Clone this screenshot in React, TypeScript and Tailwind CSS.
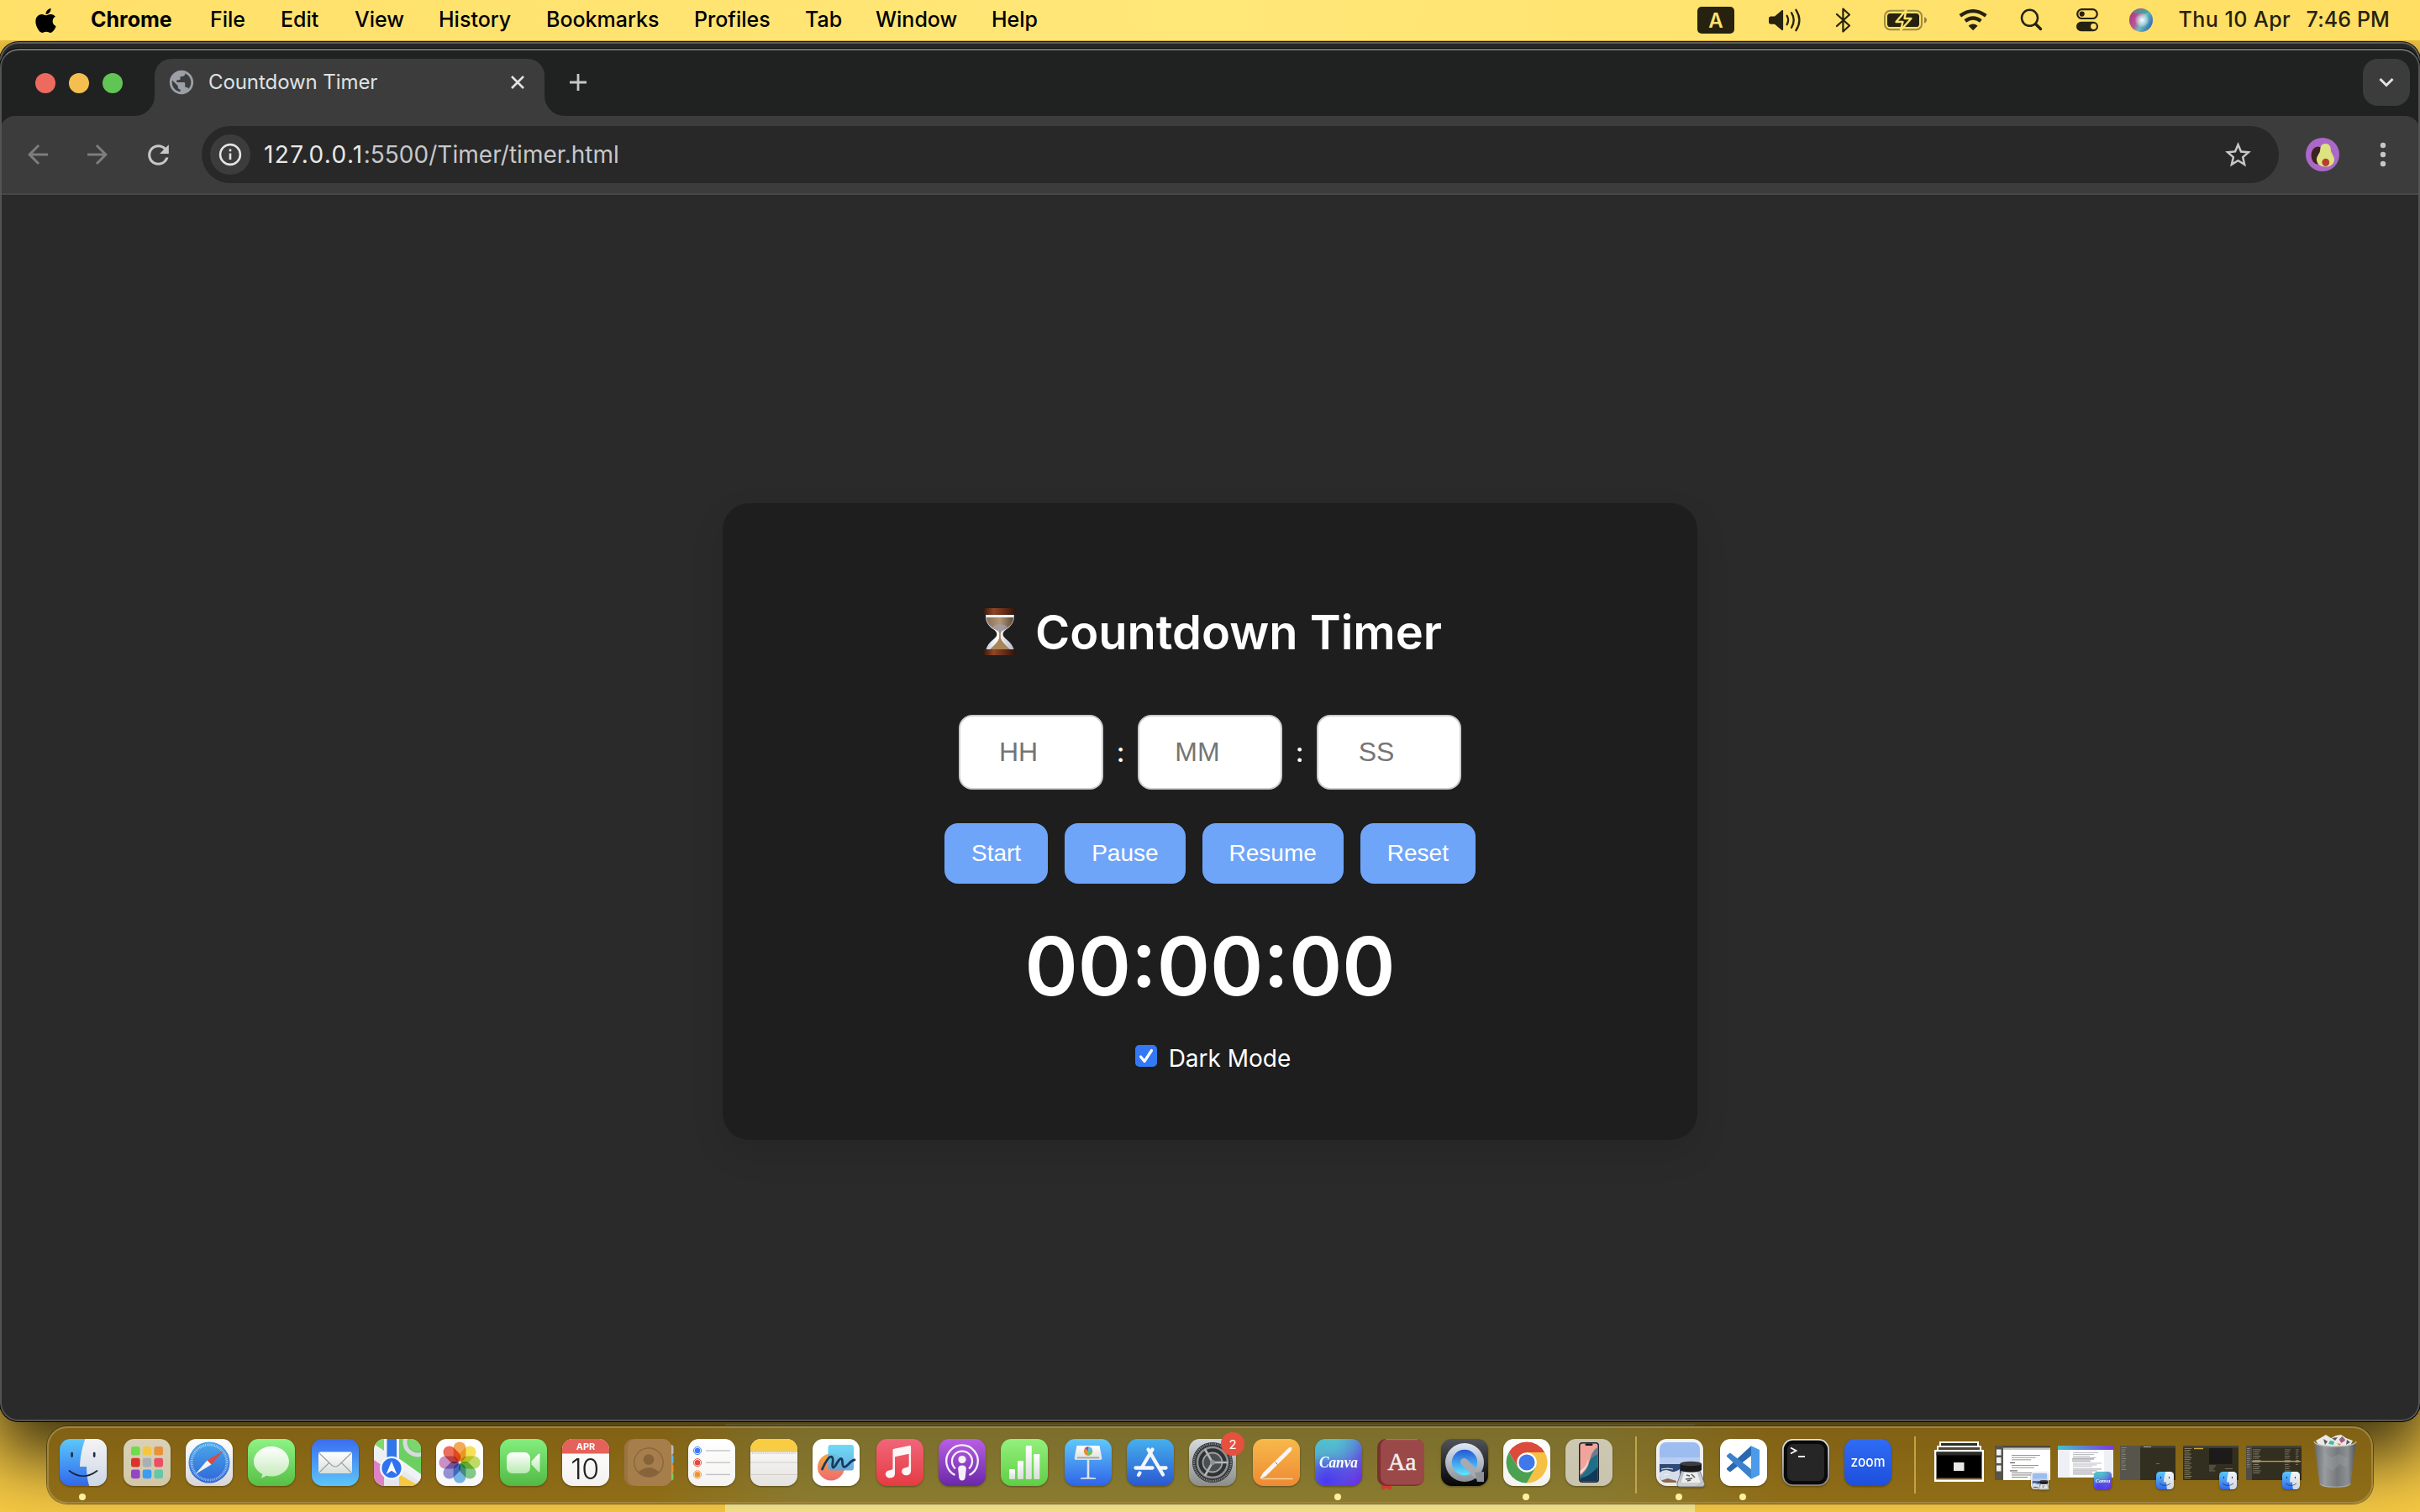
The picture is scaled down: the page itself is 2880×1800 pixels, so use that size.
import React from "react";
import { FaApple } from "react-icons/fa";
import { MdPublic, MdStarBorder, MdRefresh, MdArrowBack, MdArrowForward } from "react-icons/md";

const INK = "#26220f";

/* ---------- Menu bar ---------- */

const MENUS = [
  { label: "Chrome", cls: "w-[142px] font-bold" },
  { label: "File", cls: "w-[84px] font-medium" },
  { label: "Edit", cls: "w-[88px] font-medium" },
  { label: "View", cls: "w-[100px] font-medium" },
  { label: "History", cls: "w-[128px] font-medium" },
  { label: "Bookmarks", cls: "w-[176px] font-medium" },
  { label: "Profiles", cls: "w-[132px] font-medium" },
  { label: "Tab", cls: "w-[84px] font-medium" },
  { label: "Window", cls: "w-[138px] font-medium" },
  { label: "Help", cls: "w-[60px] font-medium" },
];

function StatusIcons() {
  return (
    <svg width="544" height="48" viewBox="2020 0 544 48" fill="none" className="block">
      <rect x="2020" y="8" width="44" height="32" rx="5" fill={INK} />
      <text x="2042" y="33" textAnchor="middle" fontFamily="Inter, sans-serif" fontWeight="600" fontSize="24" fill="#ffe36e">A</text>
      {/* volume */}
      <path d="M2107.5 19.5h4.5l8.5-7.2c.8-.6 1.6-.2 1.6.8v22c0 1-.8 1.4-1.6.8l-8.5-7.2h-4.5c-1.6 0-2.5-.9-2.5-2.500v-4.200c0-1.600.9-2.500 2.500-2.500z" fill={INK} />
      <path d="M2126.600 18.800q3 5.200 0 10.400M2132 15.200q5.400 8.800 0 17.600M2137.400 11.800q8 12.200 0 24.400" stroke={INK} strokeWidth="2.300" strokeLinecap="round" />
      {/* bluetooth */}
      <path d="M2186 17l15 13.500-7.600 7V10.500l7.600 7L2186 31" stroke={INK} strokeWidth="2.200" strokeLinejoin="round" strokeLinecap="round" />
      {/* battery */}
      <rect x="2243" y="12.800" width="44" height="22.400" rx="6.500" stroke={INK} strokeOpacity=".45" strokeWidth="2" />
      <path d="M2290 20.300c4 1.600 4 5.800 0 7.400z" fill={INK} fillOpacity=".5" />
      <rect x="2246" y="16" width="38" height="16" rx="3.600" fill={INK} />
      <path d="M2268.500 12l-12 14h8l-2.500 10 12.500-14h-8z" fill={INK} stroke="#ffe26c" strokeWidth="2.400" strokeLinejoin="round" />
      {/* wifi */}
      <path d="M2332.800 18.800q15.200-11.200 30.600 0" stroke={INK} strokeWidth="4.200" strokeLinecap="butt" />
      <path d="M2338.800 25q9.300-7 18.600 0" stroke={INK} strokeWidth="4.200" />
      <path d="M2342.600 30.700q5.500-4.200 11 0l-5.500 5.600z" fill={INK} />
      {/* search */}
      <circle cx="2415.500" cy="21.300" r="9.500" stroke={INK} strokeWidth="2.500" />
      <path d="M2422.500 28.500l6 6" stroke={INK} strokeWidth="3.400" strokeLinecap="round" />
      {/* control centre */}
      <rect x="2472.200" y="11.200" width="23.600" height="10.800" rx="5.400" stroke={INK} strokeWidth="2.200" />
      <circle cx="2477.700" cy="16.600" r="3.100" fill={INK} />
      <rect x="2471" y="25.800" width="26" height="11.400" rx="5.700" fill={INK} />
      <circle cx="2491.500" cy="31.500" r="3.400" fill="#ffe16a" />
      {/* assistant orb */}
      <defs>
        <linearGradient id="orb" x1="0" y1="0.300" x2="1" y2="0.800">
          <stop offset="0" stopColor="#a83c80" /><stop offset=".35" stopColor="#b8589a" /><stop offset=".55" stopColor="#6fbcbc" /><stop offset="1" stopColor="#2460b4" />
        </linearGradient>
        <radialGradient id="orbg" cx=".55" cy=".5" r=".34"><stop offset="0" stopColor="#fff" /><stop offset=".35" stopColor="#d8f0f6" stopOpacity=".8" /><stop offset="1" stopColor="#fff" stopOpacity="0" /></radialGradient>
      </defs>
      <circle cx="2548" cy="24" r="14" fill="url(#orb)" />
      <path d="M2538 14.500q10-8 20 0q-8 4-20 0z" fill="#3aa392" opacity=".8" />
      <circle cx="2548" cy="24" r="13" fill="url(#orbg)" />
    </svg>
  );
}

function MenuBar() {
  return (
    <header className="relative flex h-12 shrink-0 items-center justify-between bg-linear-to-r from-[#ffe069] via-[#ffe778] to-[#ffde62] pl-[38px] pr-[36px] text-[25px] leading-none text-black">
      <div className="flex items-center">
        <FaApple className="mr-[37px] size-[33px]" />
        <nav className="flex pb-[2px]">
          {MENUS.map((m) => (
            <span key={m.label} className={m.cls}>{m.label}</span>
          ))}
        </nav>
      </div>
      <div className="flex items-center text-[#26220f]">
        <StatusIcons />
        <span className="ml-[29px] w-[152px] pb-[2px] font-medium tracking-[0.450px]">Thu 10 Apr</span>
        <span className="pb-[2px] font-medium tracking-[0.100px]">7:46 PM</span>
      </div>
    </header>
  );
}

/* ---------- Browser ---------- */

function TabStrip() {
  return (
    <div className="flex h-[78px] items-end bg-[#202221]">
      <div className="mb-[27px] ml-[42px] flex gap-4">
        <span className="size-6 rounded-full bg-[#ed6a5f]" />
        <span className="size-6 rounded-full bg-[#f5bf50]" />
        <span className="size-6 rounded-full bg-[#61c555]" />
      </div>
      <div className="ml-[14px] size-6 bg-[#3c3c3c]"><div className="size-6 rounded-br-[24px] bg-[#202221]" /></div>
      <div className="flex h-[68px] w-[464px] items-center rounded-t-[20px] bg-[#3c3c3c] pb-[13px] pl-[15px] pr-[23px]">
        <MdPublic className="size-[34px] text-[#9aa0a6]" />
        <span className="ml-[15px] flex-1 text-[24px] leading-none tracking-[-0.080px] text-[#dfe1e3]">Countdown Timer</span>
        <svg width="18" height="18" viewBox="0 0 18 18" stroke="#e3e3e3" strokeWidth="2.600"><path d="M2 2l14 14M16 2L2 16" /></svg>
      </div>
      <div className="size-6 bg-[#3c3c3c]"><div className="size-6 rounded-bl-[24px] bg-[#202221]" /></div>
      <svg className="mb-[28px] ml-[4px]" width="24" height="24" viewBox="0 0 24 24" stroke="#c7c7c7" strokeWidth="2.800"><path d="M12 2v20M2 12h20" /></svg>
      <div className="mb-3 ml-auto mr-[12px] flex size-14 items-center justify-center rounded-[18px] bg-[#3c3c3c]">
        <svg width="20" height="14" viewBox="0 0 20 14" fill="none" stroke="#e3e3e3" strokeWidth="3"><path d="M2.500 3l7.500 7.500L17.500 3" /></svg>
      </div>
    </div>
  );
}

function Toolbar() {
  return (
    <div className="bg-[#202221]">
      <div className="flex h-[94px] items-center rounded-t-[18px] border-b-2 border-[#474747] bg-[#3c3c3c] pb-0">
        <MdArrowBack className="ml-[27px] size-[36px] text-[#7d7d7d]" />
        <MdArrowForward className="ml-[35px] size-[36px] text-[#7d7d7d]" />
        <MdRefresh className="ml-[36px] size-[37px] text-[#c7c7c7]" />
        <div className="ml-[33px] flex h-[68px] w-[2472px] items-center rounded-full bg-[#282828] pl-[10px] pr-[30px]">
          <span className="flex size-12 items-center justify-center rounded-full bg-[#3c3c3c]">
            <svg width="28" height="28" viewBox="0 0 28 28" fill="none"><circle cx="14" cy="14" r="11.900" stroke="#e3e3e3" strokeWidth="2.600" /><path d="M14 12.500v7.500M14 7.500v2.700" stroke="#e3e3e3" strokeWidth="2.600" /></svg>
          </span>
          <span className="ml-[16px] flex-1 text-[28px] leading-none tracking-[0.030px] text-[#c7c7c7]"><span className="tracking-[1.350px] text-[#e8e8e8]">127.0.0.1</span>:5500/Timer/timer.html</span>
          <MdStarBorder className="size-[37px] text-[#c7c7c7]" />
        </div>
        <svg className="ml-[32px]" width="40" height="40" viewBox="0 0 40 40">
          <circle cx="20" cy="20" r="20" fill="#ab68c8" />
          <ellipse cx="14.500" cy="21" rx="8" ry="10.500" fill="#3b2320" />
          <path d="M23.500 7c4.500 0 6.500 3.600 6.300 7.400-.1 3 4.200 7 4.200 11.500 0 5-4.500 8.600-10.500 8.600S13 31 13 26c0-4.500 4-7.600 4.200-11.200C17.400 10.500 19 7 23.500 7z" fill="#dde37f" />
          <ellipse cx="23.800" cy="29.300" rx="4.400" ry="4.600" fill="#b8402b" />
        </svg>
        <svg className="ml-[48px]" width="8" height="32" viewBox="0 0 8 32" fill="#c7c7c7"><circle cx="4" cy="5" r="3.200" /><circle cx="4" cy="16" r="3.200" /><circle cx="4" cy="27" r="3.200" /></svg>
      </div>
    </div>
  );
}

function Hourglass() {
  return (
    <svg width="62" height="60" viewBox="0 0 62 60" className="-mt-[3px]">
      <defs>
        <linearGradient id="wood" x1="0" x2="1"><stop offset="0" stopColor="#3c1a0e" /><stop offset=".3" stopColor="#8f4626" /><stop offset=".6" stopColor="#6b2f18" /><stop offset="1" stopColor="#2c130b" /></linearGradient>
        <linearGradient id="sandT" x1="0" x2="1"><stop offset="0" stopColor="#8a6f54" /><stop offset=".5" stopColor="#b3967a" /><stop offset="1" stopColor="#5e4a38" /></linearGradient>
        <linearGradient id="glassB" x1="0" x2="1"><stop offset="0" stopColor="#c4c9dc" /><stop offset=".4" stopColor="#ffffff" /><stop offset="1" stopColor="#b2b7cc" /></linearGradient>
      </defs>
      <path d="M14 9h34c.5 9-3 14-9 18-4 3-5 5-4 8 1 2 4 4 7 7 4 4 6 8 6 13H14c0-5 2-9 6-13 3-3 6-5 7-7 1-3 0-5-4-8-6-4-9.500-9-9-18z" fill="url(#glassB)" />
      <path d="M15 13h32c-.5 6-3 9.500-8 13-3 2-5 3-8 3s-5-1-8-3c-5-3.500-7.500-7-8-13z" fill="url(#sandT)" />
      <path d="M22 24q9-6 18 0l-9 8z" fill="#9fa0aa" opacity=".75" />
      <path d="M31 28v14" stroke="#a58561" strokeWidth="1.600" />
      <path d="M31 34c1 8 7 12 12 17H19c5-5 11-9 12-17z" fill="#a88457" />
      <path d="M15 10h32v3H15z" fill="#eef3f5" />
      <rect x="12" y="2" width="38" height="8" rx="2" fill="url(#wood)" />
      <rect x="12" y="51" width="38" height="7" rx="2" fill="url(#wood)" />
    </svg>
  );
}

function TimerInput({ placeholder }: { placeholder: string }) {
  return (
    <input
      placeholder={placeholder}
      className="h-[89px] w-[172px] rounded-[16px] border-2 border-[#cccccc] bg-white pl-[20px] pr-[50px] text-center font-['Liberation_Sans',Arial,sans-serif] text-[32px] text-black placeholder:text-[#757575]"
    />
  );
}

function TimerCard() {
  return (
    <section className="mt-[367px] flex h-[758px] w-[1160px] flex-col items-center rounded-[32px] bg-[#1e1e1e] pt-[120px] text-white shadow-[0_16px_40px_rgba(0,0,0,0.1)]">
      <h1 className="flex h-[68px] items-center gap-[11px] pr-[5px] text-[56px] font-semibold leading-none"><Hourglass /><span>Countdown Timer</span></h1>
      <div className="mt-16 flex items-center text-[32px] font-medium">
        <TimerInput placeholder="HH" />
        <span className="w-[41px] text-center">:</span>
        <TimerInput placeholder="MM" />
        <span className="w-[41px] text-center">:</span>
        <TimerInput placeholder="SS" />
      </div>
      <div className="mt-10 flex gap-5 font-['Liberation_Sans',Arial,sans-serif] text-[28px]">
        {["Start", "Pause", "Resume", "Reset"].map((b) => (
          <button key={b} className="h-[72px] rounded-[16px] bg-[#6fa5f9] px-8 pb-[1px]">{b}</button>
        ))}
      </div>
      <div className="mt-10 flex h-[116px] items-center text-[96px] font-semibold leading-none">00:00:00</div>
      <label className="mt-[35px] flex h-[34px] items-center gap-[14px] pl-[7px] text-[28px] leading-none">
        <span className="-mt-[7px] flex size-[26px] items-center justify-center rounded-[5px] bg-[#3478f6]">
          <svg width="20" height="20" viewBox="0 0 20 20" fill="none" stroke="#fff" strokeWidth="3.200" strokeLinecap="round" strokeLinejoin="round"><path d="M3.500 11l4.500 5.500L16.500 3.500" /></svg>
        </span>
        Dark Mode
      </label>
    </section>
  );
}

function BrowserWindow() {
  return (
    <main className="relative mt-[10px] flex h-[1634px] shrink-0 flex-col overflow-hidden rounded-[22px] bg-[#2a2a2a] shadow-[0_0_0_1px_#050505]">
      <div className="h-[2px] shrink-0" />
      <TabStrip />
      <Toolbar />
      <div className="flex flex-1 justify-center"><TimerCard /></div>
      <div className="pointer-events-none absolute inset-0 rounded-[22px] border-2 border-[#525352] border-t-[#6e6f6e]" />
    </main>
  );
}

/* ---------- Dock icons (56 x 56) ---------- */

function Tile({ id, from, to, diag, children }: { id: string; from: string; to: string; diag?: boolean; children?: React.ReactNode }) {
  return (
    <svg width="100%" height="100%" viewBox="0 0 56 56" fill="none" className="block overflow-visible drop-shadow-[0_1px_1px_rgba(0,0,0,0.35)]">
      <defs>
        <linearGradient id={`g-${id}`} x1="0" y1="0" x2={diag ? 1 : 0} y2="1"><stop offset="0" stopColor={from} /><stop offset="1" stopColor={to} /></linearGradient>
        <linearGradient id="white" x1="0" y1="0" x2="0" y2="1"><stop offset="0" stopColor="#fff" /><stop offset="1" stopColor="#d9dedb" /></linearGradient>
        <clipPath id="tile"><rect width="56" height="56" rx="12.500" /></clipPath>
      </defs>
      <rect width="56" height="56" rx="12.500" fill={`url(#g-${id})`} />
      {children}
    </svg>
  );
}

const Finder = () => (
  <Tile id="finder" from="#5cc8fb" to="#3068ec">
    <defs><linearGradient id="fr" x1="0" y1="0" x2="0" y2="1"><stop offset="0" stopColor="#f4f4f6" /><stop offset="1" stopColor="#cdd7e6" /></linearGradient></defs>
    <g clipPath="url(#tile)">
      <path d="M30.500 0C27 9 24.500 20 24 33h8c0 9 1 16 3.200 23H56V0z" fill="url(#fr)" />
    </g>
    <path d="M14.600 17v3.600M41.200 17v3.600" stroke="#1d2b3a" strokeWidth="2.600" strokeLinecap="round" />
    <path d="M11.500 38Q28 50.500 44.500 38" stroke="#1c2530" strokeWidth="1.700" strokeLinecap="round" />
  </Tile>
);

const LAUNCH = [["#6fdc4e", "#f5c741", "#e9923a"], ["#d8352a", "#a7b0b5", "#ea4f63"], ["#9245c8", "#3b9df2", "#66c6a8"]];
const Launchpad = () => (
  <Tile id="launch" from="#d9d1b8" to="#d2c7a8">
    {LAUNCH.map((row, r) => row.map((c, i) => <rect key={`${r}${i}`} x={9 + i * 13.700} y={9 + r * 13.800} width="10.600" height="10.600" rx="2.400" fill={c} />))}
  </Tile>
);

const Safari = () => (
  <Tile id="safari" from="#ffffff" to="#d6d6d8">
    <defs><linearGradient id="sf" x1="0" y1="0" x2="0" y2="1"><stop offset="0" stopColor="#4aa8ea" /><stop offset="1" stopColor="#2f66d8" /></linearGradient></defs>
    <circle cx="28" cy="28" r="24.500" fill="url(#sf)" />
    <circle cx="28" cy="28" r="21" stroke="#e4f0fb" strokeOpacity=".8" strokeWidth="3" strokeDasharray="0.700 1.133" />
    <path d="M45 14L30.500 30.500 25.500 25.500z" fill="#dc4a3e" />
    <path d="M11.500 42L25.500 25.500l5 5z" fill="#f4f4f4" />
  </Tile>
);

const Messages = () => (
  <Tile id="msg" from="#8df385" to="#57bf45">
    <defs><linearGradient id="bub" x1="0" y1="0" x2="0" y2="1"><stop offset="0" stopColor="#fff" /><stop offset="1" stopColor="#c3ebb9" /></linearGradient></defs>
    <path d="M28 9c11.600 0 21 8 21 18s-9.400 17.500-21 17.500c-2.500 0-4.500-.3-6.500-.8-1.500 1.400-3.500 2.300-6 2.600 1-1.300 1.600-2.800 1.700-4.600C11 38.500 7 33.200 7 27 7 17 16.400 9 28 9z" fill="url(#bub)" />
  </Tile>
);

const Mail = () => (
  <Tile id="mail" from="#3a6cf0" to="#5dc6f8">
    <rect x="8" y="15.500" width="40" height="25.500" rx="2.500" fill="url(#white)" />
    <path d="M9 17l14.500 14q4.500 4 9 0L47 17M9 40l11.500-11.500M47 40L35.500 28.500" stroke="#9c9fa3" strokeWidth="1.100" />
  </Tile>
);

const Maps = () => (
  <Tile id="maps" from="#f2f4f6" to="#e4e6ea">
    <g clipPath="url(#tile)">
      <path d="M0 0h12v14L0 6z" fill="#7fd96f" />
      <path d="M30 0h26v44L30 26z" fill="#6cd061" />
      <path d="M28 22l28 20v10L28 32z" fill="#f1f2f6" />
      <path d="M0 25l12 8v23H0z" fill="#dd82c4" />
      <path d="M30 56V42l24 14z" fill="#f6c944" />
      <path d="M15.500 0h11.500v26H15.500z" fill="#2f76ea" />
      <circle cx="52" cy="4" r="15" stroke="#d7dadf" strokeWidth="5" /><circle cx="52" cy="4" r="11" fill="#7bd66e" />
    </g>
    <circle cx="21" cy="34.700" r="14" fill="#f6f6f8" /><circle cx="21" cy="34.700" r="11.600" fill="#2f73ee" />
    <path d="M21 26.500l6.300 15.500-6.300-4.300-6.300 4.300z" fill="#fff" />
  </Tile>
);

const PETALS = ["#f19a37", "#f3dc3c", "#b5d54a", "#6cbf73", "#5fa8e2", "#7d80cc", "#bf7cb8", "#ea5340"];
const Photos = () => (
  <Tile id="photos" from="#ffffff" to="#f8f8f8">
    <g className="isolate">
      {PETALS.map((c, i) => <rect key={c} x="20.600" y="3.400" width="14.800" height="23.400" rx="7.400" fill={c} fillOpacity=".85" transform={`rotate(${i * 45} 28 28)`} className="mix-blend-multiply" />)}
    </g>
  </Tile>
);

const FaceTime = () => (
  <Tile id="ft" from="#84ef7e" to="#52b944">
    <defs><linearGradient id="cam" x1="0" y1="0" x2="0" y2="1"><stop offset="0" stopColor="#fff" /><stop offset="1" stopColor="#b9e9b0" /></linearGradient></defs>
    <rect x="8" y="16" width="28" height="25" rx="6.500" fill="url(#cam)" />
    <path d="M37.500 26.500l8-8.500c1-1 2-.6 2 .8v19.400c0 1.400-1 1.800-2 .8l-8-8.500z" fill="url(#cam)" />
  </Tile>
);

const Calendar = () => (
  <Tile id="cal" from="#ffffff" to="#f3f2f0">
    <path d="M0 17.500V12.500A12.500 12.500 0 0 1 12.500 0h31A12.500 12.500 0 0 1 56 12.500v5z" fill="#e5625a" />
    <text x="28" y="13.300" textAnchor="middle" fontFamily="Inter, sans-serif" fontWeight="700" fontSize="11" fill="#fff">APR</text>
    <text x="27" y="48" textAnchor="middle" fontFamily="Inter, sans-serif" fontWeight="300" fontSize="34" fill="#222" letterSpacing="-0.500">10</text>
  </Tile>
);

const Contacts = () => (
  <svg width="100%" height="100%" viewBox="0 0 56 56" fill="none" className="block overflow-visible">
    <rect x="50" y="7" width="8.500" height="12" rx="3" fill="#b9bcc0" /><rect x="50" y="19" width="8.500" height="11" rx="2" fill="#5fb6e6" /><rect x="50" y="30" width="8.500" height="11" rx="2" fill="#e88f35" /><rect x="50" y="40" width="8.500" height="9.500" rx="3" fill="#6fd066" />
    <rect width="56" height="56" rx="11" fill="#9b7444" /><rect x="4" width="52" height="56" rx="10" fill="#a67e4b" />
    <circle cx="29" cy="28" r="17.200" stroke="#87633a" strokeWidth="1.200" /><circle cx="29" cy="24.500" r="6.300" fill="#87633a" />
    <path d="M16.500 39.500q12.500-11 25 0-12.500 11-25 0z" fill="#87633a" />
  </svg>
);

const Reminders = () => (
  <Tile id="rem" from="#ffffff" to="#f4f3f1">
    {["#3a7bf3", "#e2483e", "#ec9433"].map((c, i) => (
      <g key={c}><circle cx="11" cy={14 + i * 14.200} r="4.600" stroke={c} strokeWidth=".9" /><circle cx="11" cy={14 + i * 14.200} r="3.300" fill={c} /><path d={`M21 ${14 + i * 14.200}h29`} stroke="#c4c4c8" strokeWidth="1.400" /></g>
    ))}
  </Tile>
);

const Notes = () => (
  <Tile id="notes" from="#ffffff" to="#e3e2de">
    <path d="M0 14.500V12.500A12.500 12.500 0 0 1 12.500 0h31A12.500 12.500 0 0 1 56 12.500v2z" fill="#f8cd44" />
    <path d="M0 15h56" stroke="#a8a18c" strokeWidth=".8" />
    <path d="M2 17.200h52" stroke="#b9b8b5" strokeWidth="1.200" strokeDasharray="1 1.200" />
    <path d="M0 28h56M0 42.500h56" stroke="#cfcecb" strokeWidth="1" />
  </Tile>
);

const Freeform = () => (
  <Tile id="ff" from="#ffffff" to="#ffffff">
    <defs>
      <linearGradient id="ffo" x1="0" y1="0" x2="0" y2="1"><stop offset="0" stopColor="#f6a93b" /><stop offset="1" stopColor="#ee6a72" /></linearGradient>
      <linearGradient id="ffc" x1="0" y1="0" x2="0" y2="1"><stop offset="0" stopColor="#62d9f6" /><stop offset="1" stopColor="#5ba5dd" /></linearGradient>
    </defs>
    <circle cx="22" cy="33.500" r="16" fill="url(#ffo)" /><rect x="18.500" y="7" width="30.500" height="30.500" rx="3" fill="url(#ffc)" fillOpacity=".92" />
    <path d="M11.500 36C15 28 20 19.500 23 21.500c3.500 2.500-1.500 12 1.500 12.500 3 .5 6-11 9.500-10.500 3 .5 0 9 3.500 9.800 4 .8 7.500-8.300 12.500-8.300" stroke="#143a5e" strokeWidth="2.800" strokeLinecap="round" />
  </Tile>
);

const Music = () => (
  <Tile id="music" from="#f0667a" to="#e63b42">
    <path d="M19.500 13.500c0-1 .5-1.500 1.500-1.700L39.500 8c1-.2 1.600.2 1.600 1.200v28.500c0 4-2.500 5.500-5.600 5.500-3 0-5.300-1.800-5.300-4.500 0-3.500 3-4.500 5.500-4.800 2.300-.3 3-.8 3-2.600V17.800L22 21.300v20c0 3.500-2.600 5.200-5.600 5.200-3.200 0-5.500-1.800-5.500-4.500 0-3.200 2.600-4.300 5.200-4.700 2.600-.4 3.400-.9 3.400-2.700z" fill="#fdf6f6" />
  </Tile>
);

const Podcasts = () => (
  <Tile id="pod" from="#b85fe4" to="#6a28a8">
    <path d="M19.500 43a18.800 18.800 0 1 1 17 0" stroke="#f5effa" strokeWidth="2.300" />
    <path d="M20 35.500a12 12 0 1 1 16 0" stroke="#f5effa" strokeWidth="2.300" />
    <circle cx="28" cy="24.500" r="4.600" fill="#f5effa" />
    <path d="M28 31.500c3.500 0 5 1.600 4.800 4.500l-1 9.500c-.3 2.600-1.600 4-3.800 4s-3.500-1.400-3.800-4l-1-9.500c-.2-2.900 1.300-4.500 4.800-4.500z" fill="#f5effa" />
  </Tile>
);

const Numbers = () => (
  <Tile id="num" from="#93f07c" to="#5fce45">
    {[[10, 36], [20, 26], [29.800, 8], [39.300, 18]].map(([x, y]) => <rect key={x} x={x} y={y} width="7" height={48 - y} rx="1" fill="url(#white)" />)}
  </Tile>
);

const Keynote = () => (
  <Tile id="key" from="#60c8fa" to="#2f64e8">
    <path d="M14.500 8h27l2.800 14.500c.3 1.600-.3 2.500-2 2.500H13.700c-1.700 0-2.300-.9-2-2.500z" fill="url(#white)" />
    <path d="M15 21.500h26v1.800H15z" fill="#a9a49c" />
    <circle cx="28" cy="14.500" r="5.200" fill="#e58d3c" /><path d="M28 14.500V9.300a5.200 5.200 0 0 1 5.200 5.200z" fill="#5fb8e8" /><path d="M28 14.500h5.200a5.200 5.200 0 0 1-6.500 5z" fill="#6cc561" /><path d="M28 14.500l-4-3.400A5.200 5.200 0 0 1 28 9.300z" fill="#9a4fa8" />
    <path d="M28 25v21" stroke="#dfe2e6" strokeWidth="2.600" /><path d="M19 47.200q9-2.400 18 0z" fill="#dfe2e6" stroke="#dfe2e6" />
  </Tile>
);

const AppStore = () => (
  <Tile id="as" from="#45b0ee" to="#2a58d0">
    <g stroke="#f3f6fb" strokeWidth="4.300" strokeLinecap="round"><path d="M30.500 12.500L18.500 33M15.500 40.500l-1.500 2.500M25.500 12.500L43 42.500M10.500 34.500h20M38.500 34.500h8" /></g>
  </Tile>
);

const Settings = () => (
  <div className="relative size-full">
    <Tile id="set" from="#d3dbe0" to="#8d8c8a">
      <circle cx="28" cy="28" r="24" fill="#2f3132" /><circle cx="28" cy="28" r="22" stroke="#85898b" strokeWidth="2.500" strokeDasharray="1.200 1.100" />
      <circle cx="28" cy="28" r="18" stroke="#8d9193" strokeWidth="2.600" /><circle cx="28" cy="28" r="11.500" fill="#4c4f50" stroke="#9da1a3" strokeWidth="1.800" />
      <path d="M28 28h18.500M28 28l-9.200-16M28 28l-9.200 16" stroke="#b3b7b9" strokeWidth="2.600" /><circle cx="28" cy="28" r="3" fill="#8f9395" />
    </Tile>
    <span className="absolute -right-[10px] -top-[8px] flex size-7 items-center justify-center rounded-full bg-[#e5503f] text-[15px] leading-none text-white">2</span>
  </div>
);

const Pages = () => (
  <Tile id="pages" from="#f8b94b" to="#ee8a33">
    <path d="M11 47.500h36" stroke="#f8d09a" strokeWidth="1.600" strokeLinecap="round" />
    <path d="M46 10.500L43 10.800 12.500 40.500 9 47l6.500-3.200L45.500 14z" fill="#f7f6f4" stroke="#f7f6f4" strokeWidth="1" strokeLinejoin="round" />
    <path d="M26.500 27.500l3 3" stroke="#7a7570" strokeWidth="1" />
  </Tile>
);

const Canva = () => (
  <Tile id="canva" from="#4cc5c8" to="#6a25e8" diag>
    <defs><radialGradient id="cv" cx=".25" cy=".9" r=".6"><stop offset="0" stopColor="#4a38f0" /><stop offset="1" stopColor="#4a38f0" stopOpacity="0" /></radialGradient><radialGradient id="cv2" cx=".4" cy="0" r=".65"><stop offset="0" stopColor="#54c3ce" /><stop offset="1" stopColor="#54c3ce" stopOpacity="0" /></radialGradient></defs>
    <rect width="56" height="56" rx="12.500" fill="url(#cv)" /><rect width="56" height="56" rx="12.500" fill="url(#cv2)" />
    <text x="28" y="33.500" textAnchor="middle" fontFamily="'Liberation Serif', serif" fontStyle="italic" fontWeight="700" fontSize="19" textLength="46" lengthAdjust="spacingAndGlyphs" fill="#fff">Canva</text>
  </Tile>
);

const Dictionary = () => (
  <svg width="100%" height="100%" viewBox="0 0 56 56" fill="none" className="block overflow-visible">
    <path d="M5 50h12v11l-6-2.500L5 61z" fill="#cf3a30" />
    <rect width="56" height="56" rx="10" fill="#7c2f30" /><rect x="4" width="52" height="54.500" rx="9" fill="#9b4948" /><path d="M10 .7h38" stroke="#c47472" strokeWidth="1" />
    <text x="29.500" y="36.500" textAnchor="middle" fontFamily="'Liberation Serif', serif" fontSize="29" fill="#f3efee" stroke="#f3efee" strokeWidth=".5">Aa</text>
  </svg>
);

const QuickTime = () => (
  <Tile id="qt" from="#515357" to="#050506">
    <defs><linearGradient id="qr" x1="0" y1="0" x2="0" y2="1"><stop offset="0" stopColor="#dfe8f8" /><stop offset="1" stopColor="#8b8f96" /></linearGradient><linearGradient id="qb" x1="0" y1="0" x2="0" y2="1"><stop offset="0" stopColor="#2458d8" /><stop offset="1" stopColor="#5fe8ff" /></linearGradient></defs>
    <circle cx="28" cy="28" r="23" fill="url(#qr)" /><circle cx="28" cy="28" r="15.200" fill="url(#qb)" />
    <path d="M27.500 27.500L44 43.500" stroke="#a6abb2" strokeWidth="9" strokeLinecap="round" /><path d="M40 40l11-1v12h-8z" fill="#8e9298" />
  </Tile>
);

const ChromeIcon = () => (
  <Tile id="chrome" from="#ffffff" to="#f4f3ef">
    <path d="M28 15.900h21.300a24.500 24.500 0 0 1-21.300 36.600L38.500 34z" fill="#f5c044" /><path d="M28 15.900h21.300A24.500 24.500 0 0 0 6.800 15.700L17.500 34z" fill="#dc4a3c" /><path d="M17.500 34L6.800 15.700A24.500 24.500 0 0 0 28 52.500L38.500 34z" fill="#4ba152" />
    <circle cx="28" cy="28" r="11.800" fill="#fff" /><circle cx="28" cy="28" r="9.600" fill="#3f78e8" />
  </Tile>
);

const Mirroring = () => (
  <Tile id="phone" from="#cdc8b2" to="#c9c4ad">
    <defs><clipPath id="ph"><rect x="17.500" y="5.500" width="21" height="45" rx="2.500" /></clipPath></defs>
    <rect x="16" y="4" width="24" height="48" rx="4" fill="#20242a" />
    <g clipPath="url(#ph)"><rect x="17" y="5" width="22" height="46" fill="#f0a49c" /><path d="M39 9q-10 7-10 20l-12 16h22z" fill="#6f7c8c" /><path d="M17 42q9-6 10-14v-4q-2 10-10 14z" fill="#f5dcd8" /><path d="M39 18q-11 4-12 14-2 8-10 12v8h22z" fill="#1f6f86" /><path d="M17 47q12-2 22-14v19H17z" fill="#123a58" /></g>
    <rect x="23.500" y="5.500" width="9" height="2.600" rx="1.300" fill="#15171a" />
  </Tile>
);

const Preview = () => (
  <Tile id="prev" from="#f3f3f5" to="#e9e9eb">
    <defs><clipPath id="pv"><rect x="4" y="4" width="48" height="48" rx="8" /></clipPath></defs>
    <g clipPath="url(#pv)"><rect x="4" y="4" width="48" height="27" fill="#9dbdf0" /><rect x="4" y="22" width="48" height="9" fill="#b9cdf0" /><rect x="4" y="30" width="48" height="22" fill="#2d4a78" /><path d="M4 40q6-5 12-2t12-2v16H4z" fill="#d5deea" /><path d="M4 50l10-3 10 3v3H4z" fill="#8a6a4a" /><path d="M6 36l8-1 6 1M9 43l6-1" stroke="#eef3f8" strokeWidth="1.200" /></g>
    <path d="M30 38h22l5.500 15c.6 2-1 4-3.500 4H28.500c-2.500 0-4.200-2-3.500-4z" fill="#c9cccd" fillOpacity=".92" stroke="#6f7274" strokeWidth=".9" /><path d="M33 40h16l3.500 12h-23z" fill="#eceeed" />
    <path d="M36 43l4 1M42 42l4 4M35 48l8-1M37 50l4-1" stroke="#55595c" strokeWidth="1.500" />
    <path d="M28.500 29.500v7c0 4 25.500 4 25.500 0v-7z" fill="#17181a" /><ellipse cx="41.200" cy="29.500" rx="12.700" ry="2.800" fill="#3b3d40" />
  </Tile>
);

const VSCode = () => (
  <Tile id="vs" from="#ffffff" to="#ffffff">
    <path d="M37 8.200L47 13v30l-10 4.800z" fill="#4a9be8" />
    <path d="M37 8.200L8.500 34.500c-.8.700-.8 1.600 0 2.300l2.400 2c.7.500 1.400.5 2 0L37 20z" fill="#2a68b0" />
    <path d="M37 47.800L8.500 21.500c-.8-.7-.8-1.600 0-2.300l2.400-2c.7-.5 1.400-.5 2 0L37 36z" fill="#3a82cc" />
  </Tile>
);

const Terminal = () => (
  <Tile id="term" from="#dfe6ea" to="#8a8682">
    <rect x="1.800" y="1.800" width="52.400" height="52.400" rx="11" fill="#0a0a0a" /><rect x="6" y="6" width="44" height="44" rx="6.500" fill="#262626" />
    <path d="M10 10.500l6.500 3.500-6.500 3.500" stroke="#fff" strokeWidth="1.800" /><path d="M19 21h8" stroke="#fff" strokeWidth="1.800" />
  </Tile>
);

const Zoom = () => (
  <Tile id="zoom" from="#2f6cf6" to="#1d4fdc">
    <text x="28" y="32.500" textAnchor="middle" fontFamily="Inter, sans-serif" fontWeight="500" fontSize="17" textLength="41" lengthAdjust="spacingAndGlyphs" fill="#fff">zoom</text>
  </Tile>
);

/* ---------- Dock thumbnails ---------- */

const Stack = () => (
  <svg width="60" height="50" viewBox="0 0 60 50">
    <rect x="7" y="0" width="47" height="8" fill="#fff" /><rect x="9" y="2" width="43" height="4" fill="#2f2c22" />
    <rect x="4" y="5" width="53" height="8" fill="#fff" /><rect x="6" y="7" width="49" height="3" fill="#4d4630" />
    <rect x="1" y="10" width="59" height="38" fill="#fff" /><rect x="3.500" y="12.500" width="54" height="32.500" fill="#000" />
    <rect x="3.500" y="12.500" width="54" height="4" fill="#2b2b29" /><rect x="3.500" y="43.500" width="54" height="2" fill="#7d6a3c" /><rect x="24" y="25" width="12.500" height="10" fill="#e9e9e7" />
  </svg>
);

const lines = (n: number, x: number, w: number, y0: number, step: number, c: string) =>
  Array.from({ length: n }, (_, i) => <rect key={`${x}-${i}-${c}`} x={x} y={y0 + i * step} width={w - ((i * 7) % 5) * w * 0.08} height="0.900" fill={c} />);

const ThumbDoc = () => (
  <svg width="66" height="41" viewBox="0 0 66 41">
    <rect width="66" height="41" fill="#fff" /><rect width="66" height="3" fill="#4a4840" /><rect y="2.500" x="10" width="56" height="2.500" fill="#c9c7c2" /><rect width="10" height="41" fill="#57544c" />
    {[4.500, 14, 23.500].map((y) => <rect key={y} x="2" y={y} width="5.500" height="7" fill="#f1f1f1" />)}
    {lines(3, 20, 34, 11, 2.700, "#8f8a80")}{lines(1, 18, 6, 20, 2, "#333")}{lines(2, 20, 32, 23, 2.700, "#8a8a8a")}{lines(1, 18, 9, 29.500, 2, "#333")}{lines(3, 20, 28, 32, 2.500, "#777")}
  </svg>
);

const ThumbCanva = () => (
  <svg width="66" height="38" viewBox="0 0 66 38">
    <defs><linearGradient id="tc"><stop offset="0" stopColor="#45bfc8" /><stop offset="1" stopColor="#7a3be0" /></linearGradient></defs>
    <rect width="66" height="38" fill="#eff0f5" /><rect width="66" height="5" fill="url(#tc)" /><rect x="14" y="6" width="41" height="31" fill="#fff" />
    {lines(4, 18, 30, 8, 2, "#b5b5bd")}{lines(2, 17, 26, 15.500, 2.200, "#77777f")}{lines(3, 18, 34, 20.500, 2, "#b5b5bd")}{lines(4, 18, 34, 27.500, 2, "#94949c")}
  </svg>
);

const ThumbPanel = ({ kind }: { kind: number }) => (
  <svg width="66" height="41" viewBox="0 0 66 41">
    <rect width="66" height="41" fill="#332f20" /><rect width="66" height="2.600" fill="#44423a" />
    {kind === 0 && (<><rect width="24" height="41" fill="#57544b" />{lines(11, 1.500, 6, 2, 2.600, "#8c897e")}{lines(1, 28, 9, 1, 2, "#bdbab0")}{lines(1, 43, 4, 21, 2, "#77735f")}</>)}
    {kind === 1 && (<>{lines(17, 1.500, 9, 3, 2.200, "#8d8566")}<rect x="13" y="2.800" width="11" height="1.400" fill="#d0a535" /><rect x="31" y="3" width="27.500" height="19" fill="#1c1b1a" />{lines(4, 31, 8, 23.500, 2, "#77735f")}{lines(1, 50, 9, 27, 2, "#77735f")}</>)}
    {kind === 2 && (<><rect width="7" height="41" fill="#4f4c44" />{lines(10, 1, 4, 3, 2.400, "#8c897e")}{lines(12, 8, 1, 4.500, 2.500, "#6fa6dc")}{lines(12, 9.500, 8, 4.500, 2.500, "#8f8a78")}{lines(12, 46, 7, 4.500, 2.500, "#7f7a68")}{lines(8, 59, 4, 4.500, 2.500, "#7f7a68")}<rect x="7" y="18" width="58" height="1.300" fill="#d0a535" /></>)}
  </svg>
);

const Trash = () => (
  <svg width="52" height="66" viewBox="0 0 52 66">
    <defs><linearGradient id="tr" x1="0" x2="1"><stop offset="0" stopColor="#66696b" /><stop offset=".25" stopColor="#989c9e" /><stop offset=".55" stopColor="#76797b" /><stop offset=".8" stopColor="#8c9092" /><stop offset="1" stopColor="#515456" /></linearGradient></defs>
    <path d="M3 8l7-4 5-3 6 4 6-3 6-1 6 4 8 3-4 8H8z" fill="#e9e9e6" />
    <path d="M12 6l5 3-3 4zM22 5l4 3 3-4zM31 8l3-5 4 4zM40 7l4 3-5 3z" fill="#55585b" /><path d="M20 8l5 1-1 4-6-1z" fill="#43b8a0" /><path d="M31 6l4-2 3 4-5 3z" fill="#a95a86" /><path d="M28 11l5 1-2 2z" fill="#e08a34" />
    <path d="M1 9c0 8 50 8 50 0l-6.500 50c-.5 7-36.500 7-37 0z" fill="url(#tr)" />
    <path d="M1 9c0 8 50 8 50 0" stroke="#b9bcbd" strokeWidth="1.300" fill="none" /><path d="M8 59c1 5.500 35 5.500 36.500 0" stroke="#c4c6c7" strokeWidth="1" fill="none" opacity=".6" />
    <path d="M12 22l10 6 8-4 12 5-2 12-8-5-9 8-9-6z" fill="#9ea2a4" opacity=".35" />
  </svg>
);

/* ---------- Dock ---------- */

const APPS = [
  { I: Finder, on: true }, { I: Launchpad }, { I: Safari }, { I: Messages }, { I: Mail }, { I: Maps }, { I: Photos }, { I: FaceTime },
  { I: Calendar }, { I: Contacts }, { I: Reminders }, { I: Notes }, { I: Freeform }, { I: Music }, { I: Podcasts }, { I: Numbers },
  { I: Keynote }, { I: AppStore }, { I: Settings }, { I: Pages }, { I: Canva, on: true }, { I: Dictionary }, { I: QuickTime },
  { I: ChromeIcon, on: true }, { I: Mirroring },
];
const RECENT = [{ I: Preview, on: true }, { I: VSCode, on: true }, { I: Terminal }, { I: Zoom }];

function DockItem({ I, on, wide }: { I: React.ComponentType; on?: boolean; wide: boolean }) {
  return (
    <div className={wide ? "w-[76px] shrink-0" : "w-[74px] shrink-0"}>
      <div className="size-14"><I /></div>
      {on && <div className="ml-[23px] mt-[9px] size-2 rounded-full bg-[#ffef9f]" />}
    </div>
  );
}

function Thumb({ children, badge }: { children: React.ReactNode; badge: React.ReactNode }) {
  return (
    <div className="relative mr-[8.670px] mt-[8px] w-[66px] shrink-0">
      {children}
      <div className="absolute left-[43px] top-[31px] size-[21px]">{badge}</div>
    </div>
  );
}

function Dock() {
  return (
    <footer className="relative ml-[56px] mt-[6px] flex h-[92px] w-[2768px] shrink-0 rounded-[24px] border-2 border-[#a0863f] pl-[13px] pt-[13px] shadow-[0_0_0_1px_rgba(50,38,5,0.6)] [background-image:linear-gradient(to_bottom,rgba(0,0,0,0.06),rgba(255,220,60,0.06)),linear-gradient(to_right,#896715_0px,#896715_720px,#83752f_910px,#83752f_1840px,#896715_2060px,#896715_100%)]">
      {APPS.map((a, i) => <DockItem key={i} {...a} wide={i % 3 === 0} />)}
      <div className="-mt-[3px] ml-[7px] mr-[23px] h-[68px] w-[2px] shrink-0 bg-[#bda551]" />
      {RECENT.map((a, i) => <DockItem key={i} {...a} wide={i % 3 === 0} />)}
      <div className="-mt-[3px] ml-[7px] mr-[21px] h-[68px] w-[2px] shrink-0 bg-[#c8a144]" />
      <div className="mr-[13px] mt-[3px] shrink-0"><Stack /></div>
      <Thumb badge={<Preview />}><ThumbDoc /></Thumb>
      <Thumb badge={<Canva />}><ThumbCanva /></Thumb>
      <Thumb badge={<Finder />}><ThumbPanel kind={0} /></Thumb>
      <Thumb badge={<Finder />}><ThumbPanel kind={1} /></Thumb>
      <Thumb badge={<Finder />}><ThumbPanel kind={2} /></Thumb>
      <div className="-mt-[6px] ml-[6px] shrink-0"><Trash /></div>
    </footer>
  );
}

export default function App() {
  return (
    <div className="relative flex h-[1800px] w-[2880px] flex-col overflow-hidden bg-[#f6c944] font-[Inter,sans-serif]">
      <div className="absolute bottom-0 left-[863px] h-[105px] w-[1154px] bg-[#f8e68c]" />
      <div className="absolute left-0 top-[58px] h-[1634px] w-full rounded-[22px] shadow-[0_36px_80px_8px_rgba(0,0,0,0.75)]" />
      <div className="absolute left-0 top-[50px] h-[200px] w-full rounded-t-[22px] border-2 border-[#5c5c5c] bg-[#262626] shadow-[0_0_0_1px_#1a1608]" />
      <MenuBar />
      <BrowserWindow />
      <Dock />
    </div>
  );
}
